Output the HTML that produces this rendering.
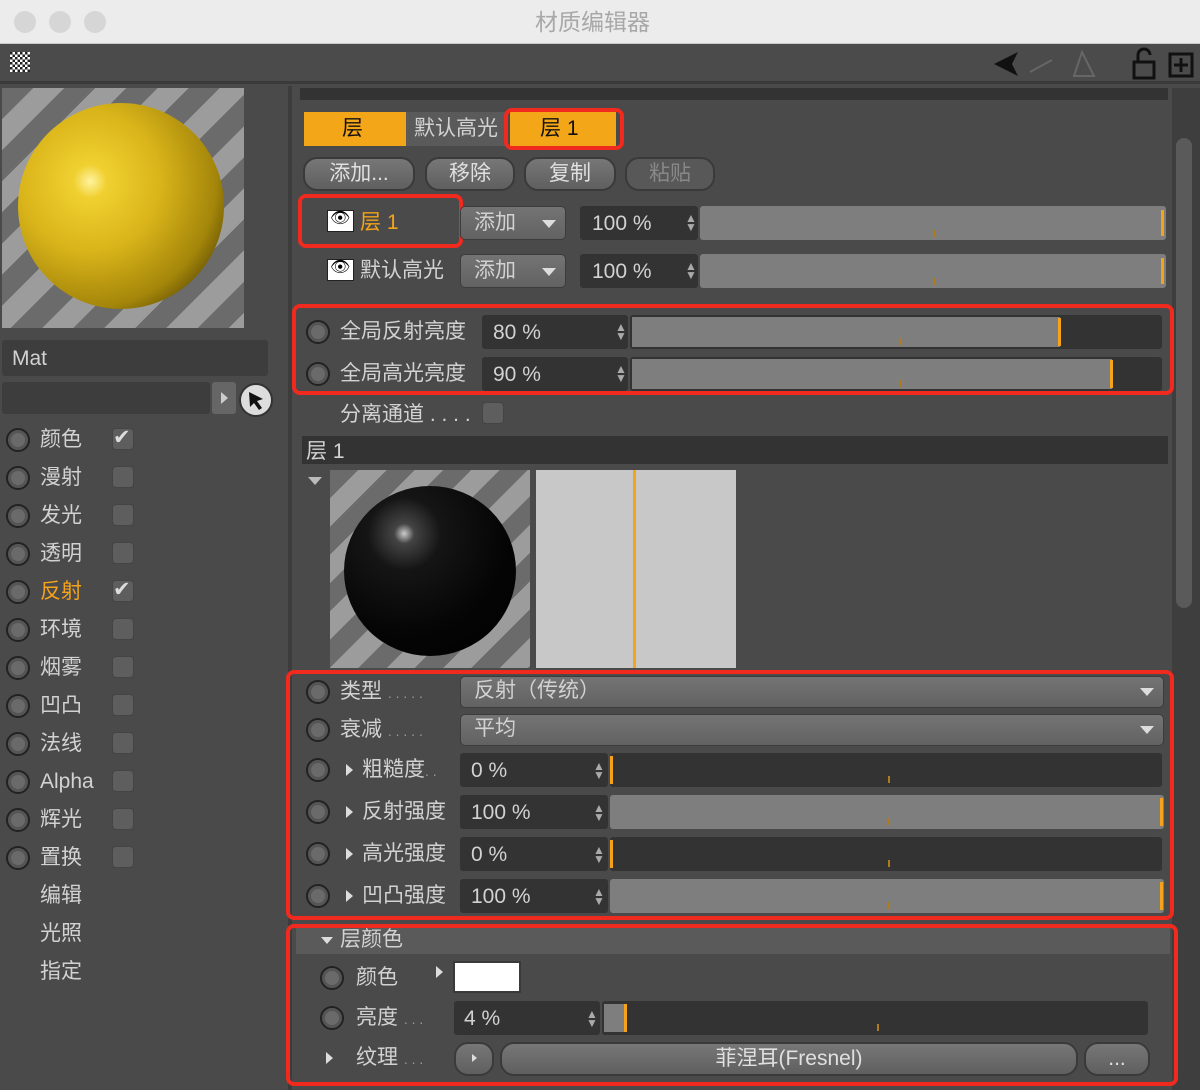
<!DOCTYPE html><html><head><meta charset="utf-8"><style>
*{box-sizing:border-box;margin:0;padding:0}
body{width:1200px;height:1090px;overflow:hidden;background:#4a4a4a;font-family:"Liberation Sans","Noto Sans CJK SC",sans-serif;color:#d2d2d2;font-size:21px;position:relative}
.a{position:absolute}
.t{position:absolute;line-height:1;white-space:nowrap}
.rad{position:absolute;width:24px;height:24px;border-radius:50%;border:2px solid #222;background:#6a6a6a;box-shadow:inset 0 0 0 3px #555}
.cb{position:absolute;width:22px;height:22px;border-radius:4px;background:#5e5e5e;border:1px solid #444}
.fld{position:absolute;background:#333;border-radius:3px}
.sl{position:absolute;background:#333;border-radius:3px}
.btn{position:absolute;background:linear-gradient(#777,#5f5f5f);border-radius:14px;border:2px solid #3a3a3a;color:#e0e0e0;text-align:center;line-height:29px}
.red{position:absolute;border:4px solid #f02a1e;border-radius:8px}
.dd{position:absolute;background:linear-gradient(#747474,#626262);border-radius:5px;border:1px solid #3c3c3c}
.arr{position:absolute;width:0;height:0;border-left:7px solid transparent;border-right:7px solid transparent;border-top:8px solid #ddd}
.tri{position:absolute;width:0;height:0;border-top:6px solid transparent;border-bottom:6px solid transparent;border-left:7px solid #ddd}
.spin{position:absolute;color:#aaa;font-size:12px;line-height:9px}
.tick{position:absolute;width:2px;height:7px;background:#b07a20}
.ol{position:absolute;width:3px;background:#f4a31a}
</style></head><body>
<div class="a" style="left:0;top:0;width:1200px;height:44px;background:#ececec;border-bottom:1px solid #c8c8c8"></div>
<div class="a" style="left:14px;top:11px;width:22px;height:22px;border-radius:50%;background:#d6d6d6"></div>
<div class="a" style="left:49px;top:11px;width:22px;height:22px;border-radius:50%;background:#d6d6d6"></div>
<div class="a" style="left:84px;top:11px;width:22px;height:22px;border-radius:50%;background:#d6d6d6"></div>
<div class="t" style="left:535px;top:11px;font-size:23px;color:#a8a8a8">材质编辑器</div>
<div class="a" style="left:0;top:44px;width:1200px;height:40px;background:#4b4b4b;border-bottom:3px solid #3a3a3a"></div>
<div class="a" style="left:10px;top:52px;width:20px;height:20px;background:repeating-conic-gradient(#fff 0 25%,#222 0 50%) 0 0/5px 5px"></div>
<svg class="a" style="left:990px;top:46px" width="210" height="36"><path d="M4 18 L28 6 L22 18 L28 30Z" fill="#111"/><path d="M40 26 L62 14" stroke="#666" stroke-width="2"/><path d="M92 6 L104 30 L84 30Z" fill="none" stroke="#666" stroke-width="2"/><rect x="144" y="16" width="20" height="16" fill="none" stroke="#111" stroke-width="3"/><path d="M148 16 V9 a6 6 0 0 1 12 0" fill="none" stroke="#111" stroke-width="3"/><rect x="180" y="8" width="22" height="22" fill="none" stroke="#111" stroke-width="3"/><path d="M191 12 V26 M184 19 H198" stroke="#111" stroke-width="3"/></svg>
<div class="a" style="left:2px;top:88px;width:242px;height:240px;background:repeating-linear-gradient(135deg,#6b6b6b 0 22px,#9c9c9c 22px 44px)"></div>
<div class="a" style="left:18px;top:103px;width:206px;height:206px;border-radius:50%;background:radial-gradient(circle at 35% 38%,#fff3a0 0,#f0d030 9%,#d9b41a 38%,#a4860a 68%,#3a2e02 92%)"></div>
<div class="a" style="left:288px;top:86px;width:4px;height:1004px;background:#3c3c3c"></div>
<div class="a" style="left:2px;top:340px;width:266px;height:36px;background:#3d3d3d;border-radius:3px"></div>
<div class="t" style="left:12px;top:348px">Mat</div>
<div class="a" style="left:2px;top:382px;width:208px;height:32px;background:#3d3d3d;border-radius:3px"></div>
<div class="a" style="left:212px;top:382px;width:24px;height:32px;background:#666;border-radius:3px"></div>
<div class="tri" style="left:221px;top:392px;border-left-color:#ccc"></div>
<div class="a" style="left:239px;top:383px;width:34px;height:34px;border-radius:50%;background:#ddd;border:2px solid #333"></div>
<svg class="a" style="left:245px;top:389px" width="24" height="24"><path d="M4 3 L18 10 L12 12 L17 19 L14 21 L9 14 L5 18Z" fill="#111"/></svg>
<div class="rad" style="left:6px;top:428px"></div><div class="t" style="left:40px;top:429px">颜色</div><div class="cb" style="left:112px;top:428px"></div><div class="t" style="left:113px;top:427px;color:#ddd">✔</div>
<div class="rad" style="left:6px;top:466px"></div><div class="t" style="left:40px;top:467px">漫射</div><div class="cb" style="left:112px;top:466px"></div>
<div class="rad" style="left:6px;top:504px"></div><div class="t" style="left:40px;top:505px">发光</div><div class="cb" style="left:112px;top:504px"></div>
<div class="rad" style="left:6px;top:542px"></div><div class="t" style="left:40px;top:543px">透明</div><div class="cb" style="left:112px;top:542px"></div>
<div class="rad" style="left:6px;top:580px"></div><div class="t" style="left:40px;top:581px;color:#f4a31a">反射</div><div class="cb" style="left:112px;top:580px"></div><div class="t" style="left:113px;top:579px;color:#ddd">✔</div>
<div class="rad" style="left:6px;top:618px"></div><div class="t" style="left:40px;top:619px">环境</div><div class="cb" style="left:112px;top:618px"></div>
<div class="rad" style="left:6px;top:656px"></div><div class="t" style="left:40px;top:657px">烟雾</div><div class="cb" style="left:112px;top:656px"></div>
<div class="rad" style="left:6px;top:694px"></div><div class="t" style="left:40px;top:695px">凹凸</div><div class="cb" style="left:112px;top:694px"></div>
<div class="rad" style="left:6px;top:732px"></div><div class="t" style="left:40px;top:733px">法线</div><div class="cb" style="left:112px;top:732px"></div>
<div class="rad" style="left:6px;top:770px"></div><div class="t" style="left:40px;top:771px">Alpha</div><div class="cb" style="left:112px;top:770px"></div>
<div class="rad" style="left:6px;top:808px"></div><div class="t" style="left:40px;top:809px">辉光</div><div class="cb" style="left:112px;top:808px"></div>
<div class="rad" style="left:6px;top:846px"></div><div class="t" style="left:40px;top:847px">置换</div><div class="cb" style="left:112px;top:846px"></div>
<div class="t" style="left:40px;top:885px">编辑</div>
<div class="t" style="left:40px;top:923px">光照</div>
<div class="t" style="left:40px;top:961px">指定</div>
<div class="a" style="left:1172px;top:88px;width:28px;height:1002px;background:#3e3e3e"></div>
<div class="a" style="left:1176px;top:138px;width:16px;height:470px;background:#5a5a5a;border-radius:8px"></div>
<div class="a" style="left:300px;top:88px;width:868px;height:12px;background:#333"></div>
<div class="a" style="left:304px;top:112px;width:102px;height:34px;background:#f4a619"></div><div class="t" style="left:342px;top:118px;color:#111">层</div>
<div class="a" style="left:406px;top:112px;width:100px;height:34px;background:#5a5a5a"></div><div class="t" style="left:414px;top:118px">默认高光</div>
<div class="a" style="left:510px;top:112px;width:106px;height:34px;background:#f4a619"></div><div class="t" style="left:540px;top:118px;color:#111">层 1</div>
<div class="red" style="left:504px;top:108px;width:120px;height:42px"></div>
<div class="btn" style="left:303px;top:157px;width:112px;height:34px">添加...</div>
<div class="btn" style="left:425px;top:157px;width:90px;height:34px">移除</div>
<div class="btn" style="left:524px;top:157px;width:92px;height:34px">复制</div>
<div class="btn" style="left:625px;top:157px;width:90px;height:34px;color:#888;background:#585858">粘贴</div>
<div class="red" style="left:298px;top:194px;width:165px;height:54px"></div>
<div class="a" style="left:327px;top:210px;width:27px;height:22px;background:#fff;border:1px solid #222"></div><div class="t" style="left:330px;top:211px;font-size:16px;color:#000">👁</div>
<div class="t" style="left:360px;top:212px;color:#f4a31a">层 1</div>
<div class="dd" style="left:460px;top:206px;width:106px;height:34px"></div><div class="t" style="left:474px;top:212px">添加</div><div class="arr" style="left:542px;top:220px"></div>
<div class="fld" style="left:580px;top:206px;width:118px;height:34px"></div><div class="t" style="left:592px;top:213px">100 %</div><div class="spin" style="left:685px;top:214px">▲<br>▼</div>
<div class="sl" style="left:700px;top:206px;width:466px;height:34px;background:#7e7e7e"></div><div class="tick" style="left:933px;top:230px"></div><div class="ol" style="left:1161px;top:210px;height:26px"></div>
<div class="a" style="left:327px;top:259px;width:27px;height:22px;background:#fff;border:1px solid #222"></div><div class="t" style="left:330px;top:260px;font-size:16px;color:#000">👁</div>
<div class="t" style="left:360px;top:260px">默认高光</div>
<div class="dd" style="left:460px;top:254px;width:106px;height:34px"></div><div class="t" style="left:474px;top:260px">添加</div><div class="arr" style="left:542px;top:268px"></div>
<div class="fld" style="left:580px;top:254px;width:118px;height:34px"></div><div class="t" style="left:592px;top:261px">100 %</div><div class="spin" style="left:685px;top:262px">▲<br>▼</div>
<div class="sl" style="left:700px;top:254px;width:466px;height:34px;background:#7e7e7e"></div><div class="tick" style="left:933px;top:278px"></div><div class="ol" style="left:1161px;top:258px;height:26px"></div>
<div class="red" style="left:292px;top:304px;width:882px;height:91px"></div>
<div class="rad" style="left:306px;top:320px"></div><div class="t" style="left:340px;top:321px">全局反射亮度</div>
<div class="fld" style="left:482px;top:315px;width:146px;height:34px"></div><div class="t" style="left:493px;top:322px">80 %</div><div class="spin" style="left:615px;top:323px">▲<br>▼</div>
<div class="sl" style="left:630px;top:315px;width:532px;height:34px"></div><div class="a" style="left:632px;top:317px;width:428px;height:30px;background:#7e7e7e"></div><div class="ol" style="left:1058px;top:318px;height:28px"></div><div class="tick" style="left:900px;top:338px"></div>
<div class="rad" style="left:306px;top:362px"></div><div class="t" style="left:340px;top:363px">全局高光亮度</div>
<div class="fld" style="left:482px;top:357px;width:146px;height:34px"></div><div class="t" style="left:493px;top:364px">90 %</div><div class="spin" style="left:615px;top:365px">▲<br>▼</div>
<div class="sl" style="left:630px;top:357px;width:532px;height:34px"></div><div class="a" style="left:632px;top:359px;width:480px;height:30px;background:#7e7e7e"></div><div class="ol" style="left:1110px;top:360px;height:28px"></div><div class="tick" style="left:900px;top:380px"></div>
<div class="t" style="left:340px;top:404px">分离通道 . . . .</div><div class="cb" style="left:482px;top:402px"></div>
<div class="a" style="left:302px;top:436px;width:866px;height:28px;background:#333"></div><div class="t" style="left:306px;top:441px">层 1</div>
<div class="arr" style="left:308px;top:477px;border-top-color:#bbb"></div>
<div class="a" style="left:330px;top:470px;width:200px;height:198px;background:repeating-linear-gradient(135deg,#6b6b6b 0 20px,#9c9c9c 20px 40px)"></div>
<div class="a" style="left:344px;top:486px;width:172px;height:170px;border-radius:50%;background:radial-gradient(circle at 35% 28%,#ccc 0,#444 6%,#151515 22%,#050505 60%,#000 100%)"></div>
<div class="a" style="left:536px;top:470px;width:200px;height:198px;background:#c8c8c8"></div><div class="a" style="left:633px;top:470px;width:3px;height:198px;background:#f4a31a"></div>
<div class="red" style="left:286px;top:670px;width:888px;height:250px"></div>
<div class="rad" style="left:306px;top:680px"></div><div class="t" style="left:340px;top:681px">类型 <span style="color:#999;font-size:14px">. . . . .</span></div>
<div class="dd" style="left:460px;top:676px;width:704px;height:32px"></div><div class="t" style="left:474px;top:680px">反射（传统）</div><div class="arr" style="left:1140px;top:688px"></div>
<div class="rad" style="left:306px;top:718px"></div><div class="t" style="left:340px;top:719px">衰减 <span style="color:#999;font-size:14px">. . . . .</span></div>
<div class="dd" style="left:460px;top:714px;width:704px;height:32px"></div><div class="t" style="left:474px;top:718px">平均</div><div class="arr" style="left:1140px;top:726px"></div>
<div class="rad" style="left:306px;top:758px"></div><div class="tri" style="left:346px;top:764px"></div><div class="t" style="left:362px;top:759px">粗糙度<span style="color:#999;font-size:14px">. .</span></div>
<div class="fld" style="left:460px;top:753px;width:148px;height:34px"></div><div class="t" style="left:471px;top:760px">0 %</div><div class="spin" style="left:593px;top:762px">▲<br>▼</div>
<div class="sl" style="left:610px;top:753px;width:552px;height:34px"></div><div class="ol" style="left:610px;top:756px;height:28px"></div><div class="tick" style="left:888px;top:776px"></div>
<div class="rad" style="left:306px;top:800px"></div><div class="tri" style="left:346px;top:806px"></div><div class="t" style="left:362px;top:801px">反射强度</div>
<div class="fld" style="left:460px;top:795px;width:148px;height:34px"></div><div class="t" style="left:471px;top:802px">100 %</div><div class="spin" style="left:593px;top:804px">▲<br>▼</div>
<div class="sl" style="left:610px;top:795px;width:554px;height:34px;background:#7e7e7e"></div><div class="ol" style="left:1160px;top:798px;height:28px"></div><div class="tick" style="left:888px;top:818px"></div>
<div class="rad" style="left:306px;top:842px"></div><div class="tri" style="left:346px;top:848px"></div><div class="t" style="left:362px;top:843px">高光强度</div>
<div class="fld" style="left:460px;top:837px;width:148px;height:34px"></div><div class="t" style="left:471px;top:844px">0 %</div><div class="spin" style="left:593px;top:846px">▲<br>▼</div>
<div class="sl" style="left:610px;top:837px;width:552px;height:34px"></div><div class="ol" style="left:610px;top:840px;height:28px"></div><div class="tick" style="left:888px;top:860px"></div>
<div class="rad" style="left:306px;top:884px"></div><div class="tri" style="left:346px;top:890px"></div><div class="t" style="left:362px;top:885px">凹凸强度</div>
<div class="fld" style="left:460px;top:879px;width:148px;height:34px"></div><div class="t" style="left:471px;top:886px">100 %</div><div class="spin" style="left:593px;top:888px">▲<br>▼</div>
<div class="sl" style="left:610px;top:879px;width:554px;height:34px;background:#7e7e7e"></div><div class="ol" style="left:1160px;top:882px;height:28px"></div><div class="tick" style="left:888px;top:902px"></div>
<div class="red" style="left:286px;top:924px;width:892px;height:162px"></div>
<div class="a" style="left:296px;top:928px;width:874px;height:26px;background:#5a5a5a"></div>
<div class="arr" style="left:321px;top:937px;border-left-width:6px;border-right-width:6px;border-top-width:7px"></div><div class="t" style="left:340px;top:929px">层颜色</div>
<div class="rad" style="left:320px;top:966px"></div><div class="t" style="left:356px;top:967px">颜色</div><div class="tri" style="left:436px;top:966px"></div>
<div class="a" style="left:453px;top:961px;width:68px;height:32px;background:#fff;border:2px solid #3a3a3a"></div>
<div class="rad" style="left:320px;top:1006px"></div><div class="t" style="left:356px;top:1007px">亮度 <span style="color:#999;font-size:14px">. . .</span></div>
<div class="fld" style="left:454px;top:1001px;width:146px;height:34px"></div><div class="t" style="left:464px;top:1008px">4 %</div><div class="spin" style="left:586px;top:1010px">▲<br>▼</div>
<div class="sl" style="left:602px;top:1001px;width:546px;height:34px"></div><div class="a" style="left:604px;top:1004px;width:20px;height:28px;background:#7e7e7e"></div><div class="ol" style="left:624px;top:1004px;height:28px"></div><div class="tick" style="left:877px;top:1024px"></div>
<div class="tri" style="left:326px;top:1052px"></div><div class="t" style="left:356px;top:1047px">纹理 <span style="color:#999;font-size:14px">. . .</span></div>
<div class="btn" style="left:454px;top:1042px;width:40px;height:34px"></div><div class="tri" style="left:472px;top:1054px;border-top-width:4px;border-bottom-width:4px;border-left-width:5px"></div>
<div class="btn" style="left:500px;top:1042px;width:578px;height:34px">菲涅耳(Fresnel)</div>
<div class="btn" style="left:1084px;top:1042px;width:66px;height:34px">...</div>
</body></html>
